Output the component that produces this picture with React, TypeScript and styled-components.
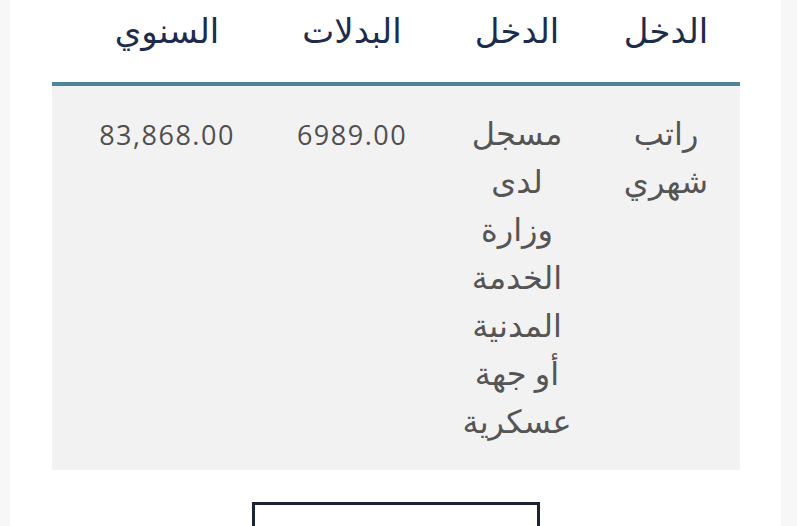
import React from "react";
import styled, { createGlobalStyle } from "styled-components";

const Global = createGlobalStyle`
  html, body { margin: 0; padding: 0; background: #f7f7f7; }
  body { font-family: "Open Sans", "DejaVu Sans", sans-serif; overflow: hidden; }
`;

const Page = styled.div`
  height: 526px;
  padding: 0 16px 0 10px;
  box-sizing: border-box;
  overflow: hidden;
`;

const Card = styled.main`
  background: #ffffff;
  height: 100%;
  padding: 0 41px 0 42px;
  box-sizing: border-box;
  direction: rtl;
  overflow: hidden;
`;

const cols = "148px 150px 180px 210px";

const HeadRow = styled.div`
  display: grid;
  grid-template-columns: ${cols};
  height: 82px;
  border-bottom: 4px solid #4b8597;
`;

const HeadCell = styled.div<{ $shift?: number }>`
  text-align: center;
  font-size: 34px;
  line-height: 60px;
  color: #1d2b4d;
  padding-left: ${(p) => p.$shift ?? 0}px;
`;

const BodyRow = styled.div`
  display: grid;
  grid-template-columns: ${cols};
  background: #f2f2f2;
  padding: 23px 0 25px;
`;

const Cell = styled.div<{ $shift?: number; $narrow?: boolean }>`
  text-align: center;
  font-size: 32px;
  line-height: 48px;
  color: #555555;
  padding-left: ${(p) => p.$shift ?? 0}px;
  ${(p) => (p.$narrow ? "width: 110px; justify-self: center;" : "")}
`;

const Num = styled.span`
  font-size: 27px;
  letter-spacing: 1.5px;
  color: #4f4f4f;
`;

const Footer = styled.div`
  display: flex;
  justify-content: center;
  padding-top: 32px;
  direction: ltr;
`;

const Button = styled.button`
  width: 288px;
  height: 24px;
  border: 3px solid #1c2433;
  border-bottom: none;
  background: #ffffff;
  font-family: "Open Sans", "DejaVu Sans", sans-serif;
  font-size: 14px;
  line-height: 18px;
  color: #1c2433;
  text-align: left;
  padding: 2px 0 0 44px;
  direction: rtl;
  overflow: hidden;
`;

export default function App() {
  return (
    <>
      <Global />
      <Page>
        <Card>
          <HeadRow>
            <HeadCell>الدخل</HeadCell>
            <HeadCell>الدخل</HeadCell>
            <HeadCell>البدلات</HeadCell>
            <HeadCell $shift={20}>السنوي</HeadCell>
          </HeadRow>
          <BodyRow>
            <Cell $narrow>راتب شهري</Cell>
            <Cell $narrow>مسجل لدى وزارة الخدمة المدنية أو جهة عسكرية</Cell>
            <Cell><Num>6989.00</Num></Cell>
            <Cell $shift={20}><Num>83,868.00</Num></Cell>
          </BodyRow>
          <Footer>
            <Button aria-label="نشر"></Button>
          </Footer>
        </Card>
      </Page>
    </>
  );
}
